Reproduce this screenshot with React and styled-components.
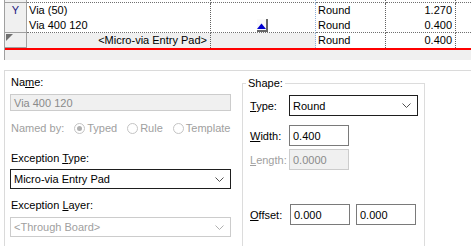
import React from "react";
import styled, { createGlobalStyle } from "styled-components";

const Global = createGlobalStyle`
  html, body { margin: 0; padding: 0; background: #fff; }
  body {
    font-family: "Liberation Sans", Arial, sans-serif;
    font-size: 11px;
    color: #000;
    width: 471px;
    height: 246px;
    overflow: hidden;
  }
`;

const cols = "22px 184px 105px 70px 70px 1fr";

function Chevron({ color = "#505050" }) {
  return (
    <svg width="9" height="5" viewBox="0 0 9 5">
      <path d="M0.5 0.5 L4.5 4.5 L8.5 0.5" fill="none" stroke={color} strokeWidth="1" />
    </svg>
  );
}

export default function App() {
  return (
    <>
      <Global />
      <Grid>
        <Row $h={3}>
          <HeadCell />
          <Cell />
          <Cell $blue />
          <Cell />
          <Cell />
          <Filler />
        </Row>
        <Row>
          <HeadCell>Y</HeadCell>
          <Cell>Via (50)</Cell>
          <Cell $blue />
          <Cell>Round</Cell>
          <Cell $right>1.270</Cell>
          <Filler />
        </Row>
        <Row>
          <HeadCell />
          <Cell>Via 400 120</Cell>
          <Cell $blue>
            <UpButton>
              <svg width="9" height="6" viewBox="0 0 9 6">
                <path d="M0 6 L4.5 0.5 L9 6 Z" fill="#0000d0" />
              </svg>
            </UpButton>
          </Cell>
          <Cell>Round</Cell>
          <Cell $right>0.400</Cell>
          <Filler />
        </Row>
        <Row $new>
          <HeadCell>
            <NewMark />
          </HeadCell>
          <Cell $gray $right>&lt;Micro-via Entry Pad&gt;</Cell>
          <Cell $gray $blue />
          <Cell>Round</Cell>
          <Cell $right>0.400</Cell>
          <Filler />
        </Row>
        <GridFoot />
      </Grid>

      <Panel>
        <LeftCol>
          <Label $top={5}>
            Na<u>m</u>e:
          </Label>
          <TextBox $disabled $w={221} $mt={5}>Via 400 120</TextBox>
          <NamedBy>
            <span>Named by:</span>
            <Radio>
              <Dot $checked />
              Typed
            </Radio>
            <Radio>
              <Dot />
              Rule
            </Radio>
            <Radio>
              <Dot />
              Template
            </Radio>
          </NamedBy>
          <Label $top={17}>
            Exception <u>T</u>ype:
          </Label>
          <Select $w={221} $mt={4}>
            <span>Micro-via Entry Pad</span>
            <Chevron />
          </Select>
          <Label $top={10}>
            Exception <u>L</u>ayer:
          </Label>
          <Select $w={221} $mt={5} $disabled>
            <span>&lt;Through Board&gt;</span>
            <Chevron color="#b0b0b0" />
          </Select>
        </LeftCol>

        <Group>
          <Legend>Shape:</Legend>
          <FieldRow $mt={11}>
            <FieldLabel>
              <u>T</u>ype:
            </FieldLabel>
            <Select $w={129} $h={21}>
              <span>Round</span>
              <Chevron />
            </Select>
          </FieldRow>
          <FieldRow $mt={9}>
            <FieldLabel>
              <u>W</u>idth:
            </FieldLabel>
            <TextBox $w={60} $h={21}>0.400</TextBox>
          </FieldRow>
          <FieldRow $mt={3}>
            <FieldLabel $disabled>
              <u>L</u>ength:
            </FieldLabel>
            <TextBox $w={60} $h={21} $disabled>0.0000</TextBox>
          </FieldRow>
          <FieldRow $mt={34}>
            <FieldLabel>
              <u>O</u>ffset:
            </FieldLabel>
            <TextBox $w={60} $h={21} $ml={1}>0.000</TextBox>
            <TextBox $w={60} $h={21} $ml={6}>0.000</TextBox>
          </FieldRow>
        </Group>
      </Panel>
    </>
  );
}

const Grid = styled.div`
  margin-left: 4px;
  border-left: 1px solid #a0a0a0;
  width: 466px;
`;

const Row = styled.div`
  display: grid;
  grid-template-columns: ${cols};
  height: ${(p) => (p.$h ? p.$h : 15)}px;
  border-bottom: ${(p) => (p.$new ? "2px solid #ff0000" : "none")};
  box-sizing: content-box;
  & > * {
    border-bottom: ${(p) => (p.$new ? "none" : "1px dotted #707070")};
  }
  & > *:first-child {
    border-bottom: 1px solid #a0a0a0;
  }
`;

const HeadCell = styled.div`
  position: relative;
  background: #f0f0f0;
  border-right: 1px solid #a0a0a0;
  display: flex;
  align-items: center;
  justify-content: center;
  color: #1a1a80;
  font-size: 11px;
  line-height: 15px;
`;

const NewMark = styled.div`
  position: absolute;
  left: 1px;
  top: 1px;
  width: 0;
  height: 0;
  border-top: 7px solid #707070;
  border-right: 7px solid transparent;
`;

const Cell = styled.div`
  display: flex;
  align-items: center;
  justify-content: ${(p) => (p.$right ? "flex-end" : "flex-start")};
  padding: 0 ${(p) => (p.$right ? "3px" : "0")} 0 2px;
  background: ${(p) => (p.$gray ? "#f0f0f0" : "#fff")};
  border-right: 1px dotted ${(p) => (p.$blue ? "#8fb0d8" : "#606060")};
  line-height: 15px;
  white-space: nowrap;
  overflow: hidden;
`;

const Filler = styled.div`
  background: #fff;
`;

const UpButton = styled.div`
  margin-left: 44px;
  width: 9px;
  height: 10px;
  background: #fafafa;
  border-right: 2px solid #686868;
  border-bottom: 2px solid #686868;
  display: flex;
  align-items: flex-end;
  justify-content: center;
  padding-bottom: 1px;
  box-sizing: content-box;
`;

const GridFoot = styled.div`
  height: 10px;
  background: #f0f0f0;
`;

const Panel = styled.div`
  margin: 10px 0 0 4px;
  border-top: 1px solid #dadada;
  border-left: 1px solid #dadada;
  height: 200px;
  display: flex;
  padding-left: 5px;
`;

const LeftCol = styled.div`
  width: 222px;
  display: flex;
  flex-direction: column;
`;

const Label = styled.div`
  margin-top: ${(p) => p.$top}px;
  margin-left: 1px;
  line-height: 13px;
  white-space: nowrap;
  color: ${(p) => (p.$disabled ? "#a0a0a0" : "#000")};
`;

const TextBox = styled.div`
  box-sizing: border-box;
  flex: none;
  width: ${(p) => p.$w}px;
  height: ${(p) => (p.$h ? p.$h : 17)}px;
  margin-top: ${(p) => (p.$mt ? p.$mt : 0)}px;
  margin-left: ${(p) => (p.$ml ? p.$ml : 0)}px;
  border: 1px solid ${(p) => (p.$disabled ? "#cccccc" : "#7a7a7a")};
  background: ${(p) => (p.$disabled ? "#f0f0f0" : "#fff")};
  color: ${(p) => (p.$disabled ? "#8a8a8a" : "#000")};
  padding-left: 3px;
  display: flex;
  align-items: center;
  font-size: 11px;
`;

const Select = styled.div`
  box-sizing: border-box;
  flex: none;
  width: ${(p) => p.$w}px;
  height: ${(p) => (p.$h ? p.$h : 20)}px;
  margin-top: ${(p) => (p.$mt ? p.$mt : 0)}px;
  border: 1px solid ${(p) => (p.$disabled ? "#cccccc" : "#1e1e1e")};
  background: #fff;
  color: ${(p) => (p.$disabled ? "#a0a0a0" : "#000")};
  padding: 0 6px 0 3px;
  display: flex;
  align-items: center;
  justify-content: space-between;
`;

const NamedBy = styled.div`
  display: flex;
  align-items: center;
  margin-top: 10px;
  margin-left: 1px;
  color: #a0a0a0;
  height: 14px;
  white-space: nowrap;
  & > span {
    margin-right: 10px;
  }
`;

const Radio = styled.label`
  display: flex;
  align-items: center;
  margin-right: 10px;
  color: #a0a0a0;
  white-space: nowrap;
`;

const Dot = styled.span`
  box-sizing: border-box;
  flex: none;
  width: 11px;
  height: 11px;
  border-radius: 50%;
  border: 1px solid #c4c4c4;
  margin-right: 2px;
  display: flex;
  align-items: center;
  justify-content: center;
  &::after {
    content: "";
    width: 5px;
    height: 5px;
    border-radius: 50%;
    background: ${(p) => (p.$checked ? "#b0b0b0" : "transparent")};
  }
`;

const Group = styled.div`
  position: relative;
  flex: none;
  margin: 12px 0 0 10px;
  width: 183px;
  height: 190px;
  border: 1px solid #dcdcdc;
  padding-left: 7px;
  box-sizing: border-box;
`;

const Legend = styled.div`
  position: absolute;
  top: -7px;
  left: 3px;
  padding: 0 2px;
  background: #fff;
  line-height: 13px;
`;

const FieldRow = styled.div`
  display: flex;
  align-items: center;
  margin-top: ${(p) => p.$mt}px;
`;

const FieldLabel = styled.div`
  width: 39px;
  flex: none;
  color: ${(p) => (p.$disabled ? "#a0a0a0" : "#000")};
`;
